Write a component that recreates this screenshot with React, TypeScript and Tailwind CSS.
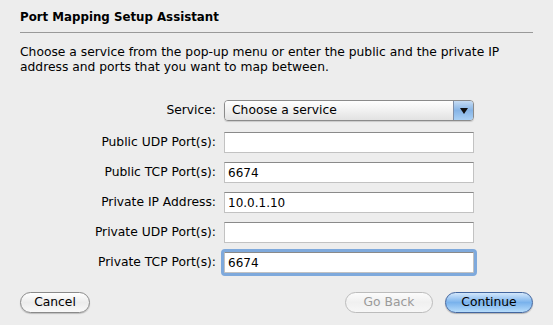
import React from 'react';

const font = { fontFamily: '"DejaVu Sans", "Liberation Sans", sans-serif' };

interface Field {
    label: string;
    value: string;
    focused?: boolean;
}

const fields: Field[] = [
    { label: 'Public UDP Port(s):', value: '' },
    { label: 'Public TCP Port(s):', value: '6674' },
    { label: 'Private IP Address:', value: '10.0.1.10' },
    { label: 'Private UDP Port(s):', value: '' },
    { label: 'Private TCP Port(s):', value: '6674', focused: true },
];

const TextField: React.FC<{ value: string; focused?: boolean }> = ({ value, focused }) => (
    <div
        className={`h-[21px] w-[250px] bg-white flex items-center px-[3px] text-[12px] text-black border border-[#c2c2c2] border-t-[#8a8a8a] ${
            focused ? 'outline-[3px] outline-solid outline-[#7ea9dc] rounded-[1px]' : ''
        }`}
    >
        {value}
    </div>
);

const App: React.FC = () => {
    return (
        <div className="w-[553px] h-[325px] bg-[#ededed] px-[20px] text-black overflow-hidden" style={font}>
            <div className="pt-[9px] text-[11.8px] leading-[16px] font-bold">Port Mapping Setup Assistant</div>
            <div className="mt-[7px] border-t border-[#999999]" />
            <p className="mt-[12px] text-[12.3px] leading-[15px]">
                Choose a service from the pop-up menu or enter the public and the private IP
                <br />
                address and ports that you want to map between.
            </p>

            <div className="mt-[25px] grid grid-cols-[196px_250px] gap-x-[8px] items-center text-[12.3px]">
                <div className="text-right">Service:</div>
                <div className="h-[21px] w-[250px] flex rounded-[4px] border border-[#8b8b8b] overflow-hidden shadow-[0_1px_1px_rgba(0,0,0,0.15)]">
                    <div className="flex-1 flex items-center pl-[7px] bg-linear-to-b from-[#ffffff] via-[#f1f1f1] to-[#e2e2e2]">
                        Choose a service
                    </div>
                    <div className="w-[20px] flex items-center justify-center border-l border-[#7f8fa8] bg-linear-to-b from-[#c6dcf3] via-[#86b4e6] to-[#a9d0f5]">
                        <svg width="8" height="6" viewBox="0 0 8 6">
                            <path d="M0 0 L8 0 L4 6 Z" fill="#111" />
                        </svg>
                    </div>
                </div>
            </div>

            <div className="mt-[11px] grid grid-cols-[196px_250px] gap-x-[8px] gap-y-[9px] items-center text-[12.3px]">
                {fields.map(f => (
                    <React.Fragment key={f.label}>
                        <div className="text-right">{f.label}</div>
                        <TextField value={f.value} focused={f.focused} />
                    </React.Fragment>
                ))}
            </div>

            <div className="mt-[19px] flex items-center text-[12.3px]">
                <button className="h-[21px] w-[70px] rounded-full border border-[#8a8a8a] bg-linear-to-b from-[#ffffff] via-[#ececec] to-[#f9f9f9] shadow-[0_1px_1px_rgba(0,0,0,0.2)]">
                    Cancel
                </button>
                <div className="flex-1" />
                <button className="h-[21px] w-[88px] rounded-full border border-[#bcbcbc] text-[#9a9a9a] bg-linear-to-b from-[#fbfbfb] via-[#f0f0f0] to-[#f7f7f7]">
                    Go Back
                </button>
                <button className="ml-[12px] h-[21px] w-[88px] rounded-full border border-[#43669f] bg-linear-to-b from-[#d3e7fb] via-[#79b2ec] to-[#b6dcfb] shadow-[0_1px_1px_rgba(0,0,0,0.25)]">
                    Continue
                </button>
            </div>
        </div>
    );
};

export default App;
